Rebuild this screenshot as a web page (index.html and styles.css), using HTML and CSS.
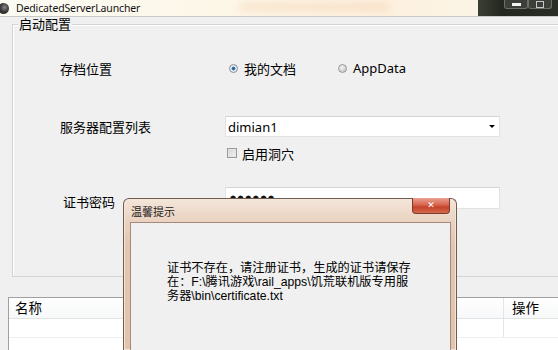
FILE: index.html
```html
<!DOCTYPE html>
<html lang="zh-CN">
<head>
    <meta charset="UTF-8">
    <meta name="viewport" content="width=device-width, initial-scale=1.0">
    <title>DedicatedServerLauncher</title>
    <link rel="stylesheet" href="styles.css">
</head>
<body>
    <div class="window">
        <div class="titlebar">
            <span class="app-icon"></span>
            <span class="app-title">DedicatedServerLauncher</span>
            <span class="glass-blur"></span>
            <div class="caption-buttons">
                <span class="cap-btn cap-min"><i></i></span>
                <span class="cap-btn cap-max"><i></i></span>
            </div>
        </div>

        <div class="group">
            <span class="group-title">启动配置</span>

            <div class="form-row row-save">
                <span class="label">存档位置</span>
                <div class="radios">
                    <label class="radio"><span class="radio-dot checked"></span>我的文档</label>
                    <label class="radio"><span class="radio-dot"></span>AppData</label>
                </div>
            </div>

            <div class="form-row row-config">
                <span class="label">服务器配置列表</span>
                <div class="combo">
                    <span>dimian1</span>
                    <span class="combo-arrow"></span>
                </div>
            </div>

            <div class="form-row row-cave">
                <span class="label"></span>
                <label class="check"><span class="check-box"></span>启用洞穴</label>
            </div>

            <div class="form-row row-pass">
                <span class="label label-pass">证书密码</span>
                <div class="textbox"><span class="dots">●●●●●●</span></div>
            </div>
        </div>

        <div class="table">
            <div class="table-head">
                <span class="col-name">名称</span>
                <span class="col-op">操作</span>
            </div>
            <div class="table-row">
                <span class="col-name"></span>
                <span class="col-op"></span>
            </div>
        </div>
    </div>

    <div class="dialog">
        <div class="dialog-title">温馨提示</div>
        <span class="dialog-close">&#x2715;</span>
        <div class="dialog-body">
            <div class="msg-line">证书不存在，请注册证书，生成的证书请保存</div>
            <div class="msg-line">在：F:\腾讯游戏\rail_apps\饥荒联机版专用服</div>
            <div class="msg-line">务器\bin\certificate.txt</div>
        </div>
    </div>
</body>
</html>
```

FILE: styles.css
```css
html, body {
    margin: 0;
    padding: 0;
}
body {
    width: 558px;
    height: 350px;
    overflow: hidden;
    position: relative;
    background-color: #f0f0f0;
    font-family: "Noto Sans", "Noto Sans CJK SC", sans-serif;
    font-size: 13px;
    color: #000;
}
.window {
    width: 558px;
    height: 350px;
    overflow: hidden;
}
.titlebar {
    height: 16px;
    display: flex;
    align-items: center;
    position: relative;
    border-bottom: 1px solid #c9c9c9;
    background: linear-gradient(90deg, #fbfaf3 0%, #fdf7e8 40%, #fdf1df 70%, #fbf4e6 85%);
}
.app-icon {
    width: 11px;
    height: 11px;
    margin-left: -2px;
    border-radius: 50%;
    background: radial-gradient(circle at 60% 40%, #8a8a8a 0, #3a3a3a 45%, #222 100%);
}
.app-title {
    margin-left: 7px;
    font-size: 10.5px;
    letter-spacing: -0.15px;
    color: #111;
    line-height: 16px;
}
.glass-blur {
    position: absolute;
    left: 240px;
    top: 3px;
    width: 150px;
    height: 8px;
    background: #f2c9a8;
    opacity: 0.45;
    filter: blur(4px);
}
.caption-buttons {
    margin-left: auto;
    width: 80px;
    height: 16px;
    display: flex;
    justify-content: flex-end;
    padding-right: 6px;
    box-sizing: border-box;
    background: linear-gradient(90deg, #3b3f33 0%, #23271f 30%, #2a2d26 100%);
}
.cap-btn {
    width: 22px;
    height: 8px;
    border: 1px solid #6d6f68;
    border-top: none;
    border-radius: 0 0 3px 3px;
    background: #3c3e38;
    display: flex;
    justify-content: center;
    align-items: center;
}
.cap-min i {
    width: 9px;
    height: 3px;
    background: #f4f4f4;
    margin-top: 1px;
}
.cap-max i {
    width: 6px;
    height: 5px;
    border: 1px solid #c8c8c8;
}

.group {
    position: relative;
    margin: 7px 0 0 12px;
    width: 600px;
    height: 253px;
    box-sizing: border-box;
    border: 1px solid #d3d3d3;
    box-shadow: inset 1px 1px 0 #fff;
    padding: 33px 0 0 47px;
}
.group-title {
    position: absolute;
    left: 5px;
    top: -8px;
    padding: 0 1px;
    background-color: #f0f0f0;
    line-height: 14px;
}

.form-row {
    display: flex;
    align-items: center;
}
.label {
    width: 165px;
    flex: none;
}
.label-pass {
    padding: 6px 0 0 3px;
    box-sizing: border-box;
}
.row-save {
    height: 20px;
}
.row-config {
    height: 21px;
    margin-top: 38px;
}
.row-cave {
    height: 12px;
    margin-top: 10px;
}
.row-pass {
    height: 22px;
    margin-top: 28px;
}

.radios {
    display: flex;
    padding-left: 4px;
}
.radio {
    display: flex;
    align-items: center;
    width: 109px;
}
.radio-dot {
    width: 7px;
    height: 7px;
    border: 1px solid #9a9a9a;
    border-radius: 50%;
    margin-right: 6px;
    background: radial-gradient(circle at 40% 35%, #f4f4f4 0, #d2d2d2 60%, #b8b8b8 100%);
}
.radio-dot.checked {
    background: radial-gradient(circle, #1f5c95 0, #3b7fbf 35%, #dfe7ee 45%, #f6f6f6 100%);
    border-color: #8a8f94;
}

.combo {
    width: 275px;
    height: 21px;
    box-sizing: border-box;
    border: 1px solid #e2e2e2;
    border-top-color: #d5d5d5;
    background-color: #fff;
    display: flex;
    align-items: center;
    padding-left: 2px;
    position: relative;
}
.combo-arrow {
    margin-left: auto;
    margin-right: 4px;
    width: 0;
    height: 0;
    border-left: 3px solid transparent;
    border-right: 3px solid transparent;
    border-top: 3px solid #000;
}

.check {
    display: flex;
    align-items: center;
    padding-left: 2px;
}
.check-box {
    width: 8px;
    height: 8px;
    border: 1px solid #9a9a9a;
    margin-right: 5px;
    background: linear-gradient(135deg, #d4d4d4, #f2f2f2);
    box-shadow: inset 0 0 0 1px #e6e6e6;
}

.textbox {
    width: 275px;
    height: 22px;
    box-sizing: border-box;
    border: 1px solid #e2e2e2;
    border-top-color: #d5d5d5;
    background-color: #fff;
    display: flex;
    align-items: center;
    padding-left: 4px;
}
.dots {
    font-family: "DejaVu Sans", sans-serif;
    font-size: 7px;
    letter-spacing: 1.5px;
    color: #111;
}

.table {
    margin: 20px 0 0 8px;
    width: 600px;
    height: 60px;
    border-left: 1px solid #a0a0a0;
    border-top: 1px solid #a0a0a0;
    background-color: #fff;
}
.table-head,
.table-row {
    display: flex;
}
.table-head {
    height: 20px;
    line-height: 20px;
    font-size: 13.5px;
    border-bottom: 1px solid #e3e3e3;
    background: linear-gradient(#ffffff, #f7f8f9);
}
.table-row {
    height: 18px;
    border-bottom: 1px solid #f0f0f0;
}
.col-name {
    width: 488px;
    padding-left: 6px;
    border-right: 1px solid #e5e5e5;
}
.col-op {
    padding-left: 8px;
}

.dialog {
    position: absolute;
    left: 123px;
    top: 198px;
    width: 334px;
    height: 152px;
    box-sizing: border-box;
    border: 1px solid #6f5d52;
    border-bottom: none;
    border-radius: 6px 6px 0 0;
    background: linear-gradient(#f4e6da 0%, #ead3c2 14%, #e4c6b0 30%, #e2c3ab 100%);
    box-shadow: inset 0 0 0 1px #f5e6da;
    padding: 23px 5px 0 6px;
}
.dialog-title {
    position: absolute;
    left: 7px;
    top: 6px;
    font-size: 11px;
    line-height: 14px;
    color: #1a1a1a;
}
.dialog-close {
    position: absolute;
    left: 288px;
    top: -1px;
    width: 38px;
    height: 16px;
    box-sizing: border-box;
    border: 1px solid #7d3a2e;
    border-top: none;
    border-radius: 0 0 4px 4px;
    background: linear-gradient(#e9a193 0%, #d8664f 45%, #c4432c 60%, #d46a4c 100%);
    color: #fff;
    font-family: "DejaVu Sans", sans-serif;
    font-size: 9px;
    font-weight: bold;
    line-height: 15px;
    text-align: center;
}
.dialog-body {
    height: 129px;
    border: 1px solid #a5897a;
    border-bottom: none;
    background-color: #f0f0f0;
    padding: 38px 0 0 36px;
    box-sizing: border-box;
}
.msg-line {
    height: 14px;
    font-family: "Liberation Sans", "Noto Sans CJK SC", sans-serif;
    font-size: 12.2px;
    line-height: 14px;
    white-space: nowrap;
}
```
